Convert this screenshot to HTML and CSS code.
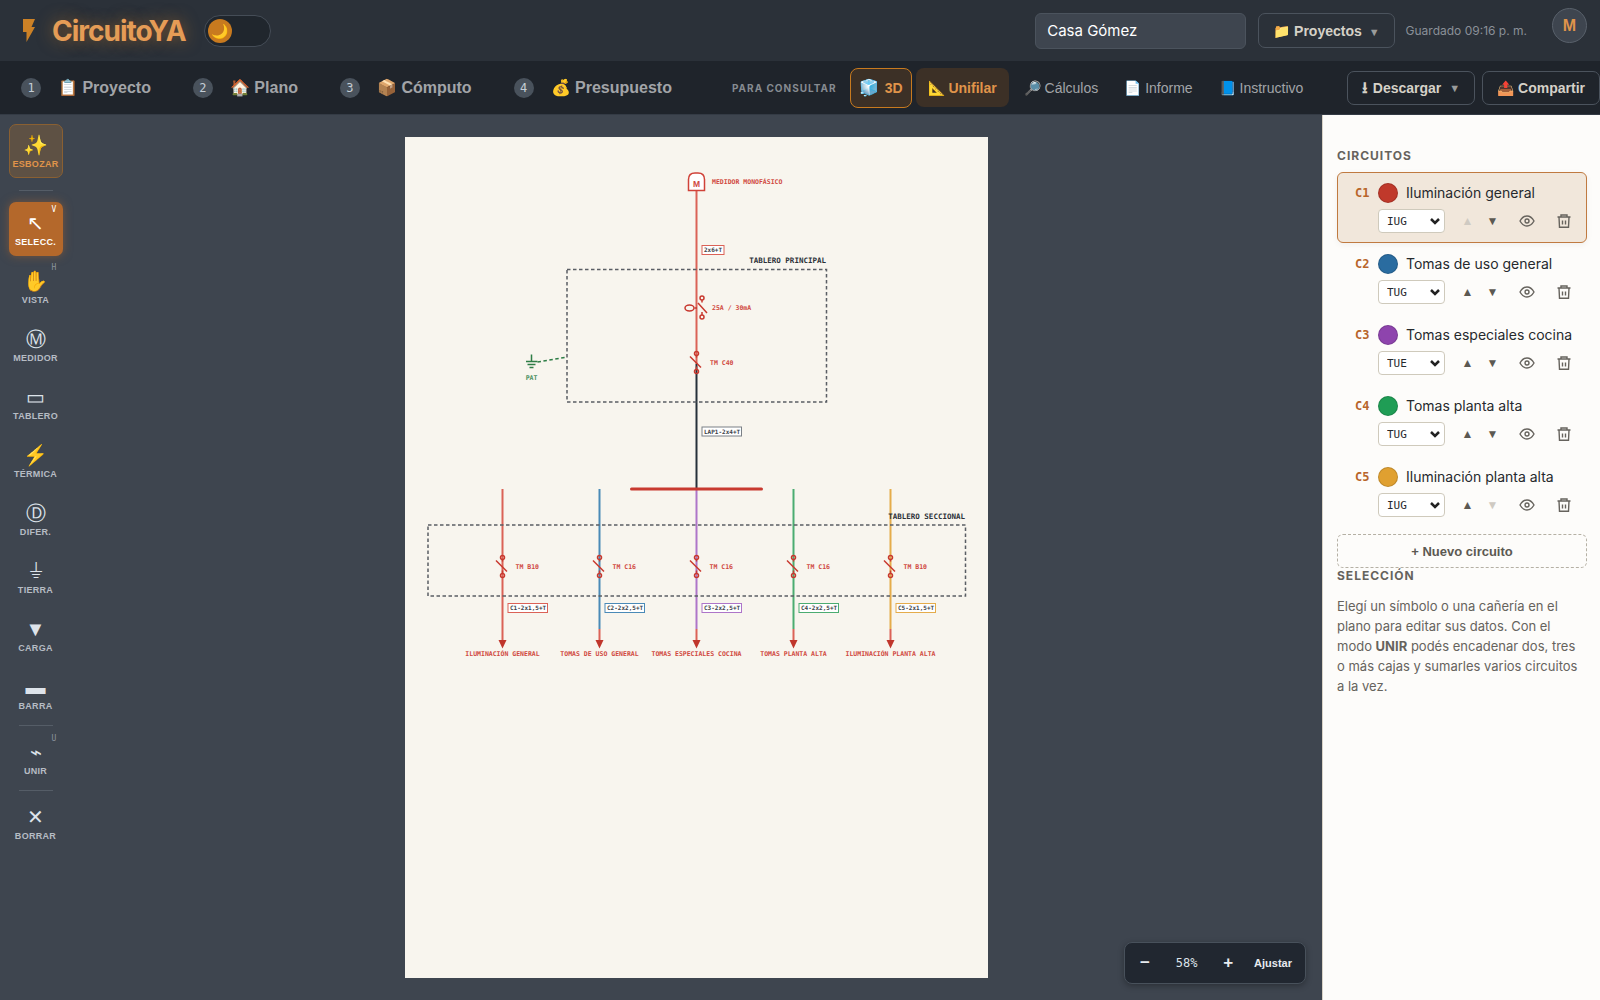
FILE: index.html
```html
<!DOCTYPE html>
<html lang="es">
<head>
<meta charset="utf-8">
<meta name="viewport" content="width=device-width, initial-scale=1">
<title>CircuitoYA</title>
<link rel="stylesheet" href="styles.css">
</head>
<body>
<svg class="defs" aria-hidden="true">
  <symbol id="eye" viewBox="0 0 16 16"><path d="M1 8C3 4.500 5.300 3 8 3s5 1.500 7 5c-2 3.500-4.300 5-7 5S3 11.500 1 8z"/><circle cx="8" cy="8" r="2"/></symbol>
  <symbol id="trash" viewBox="0 0 16 16"><path d="M1.500 4h13M5 4V2h6v2M3 4l.5 10.300h9L13 4M6.500 7.500v4M9.500 7.500v4"/></symbol>
  <symbol id="breaker" viewBox="-20 -30 40 60" overflow="visible"><path d="M-13-12L9 10"/><path d="M0-14v4M0 14v-6"/><circle cy="-18" r="4"/><circle cy="18" r="4"/></symbol>
</svg>
<div class="app">
  <header class="topbar">
    <svg class="bolt" viewBox="0 0 14 23" aria-hidden="true"><path d="M1 0h12L9.500 8H13L4.500 23V13H1z"/></svg>
    <h1 class="brand">CircuitoYA</h1>
    <button class="theme" type="button" aria-label="Cambiar tema"><span class="knob">🌙</span></button>
    <input class="project-name" type="text" value="Casa Gómez" aria-label="Nombre del proyecto">
    <button class="btn" type="button">📁 Proyectos <span class="caret">▼</span></button>
    <span class="saved">Guardado 09:16 p. m.</span>
    <button class="avatar" type="button">M</button>
  </header>

  <nav class="tabs">
    <button class="step" type="button"><span class="num">1</span>📋 Proyecto</button>
    <button class="step" type="button"><span class="num">2</span>🏠 Plano</button>
    <button class="step" type="button"><span class="num">3</span>📦 Cómputo</button>
    <button class="step" type="button"><span class="num">4</span>💰 Presupuesto</button>
    <span class="hint">PARA CONSULTAR</span>
    <button class="view view-3d" type="button"><span class="cube">🧊</span> 3D</button>
    <button class="view active" type="button">📐 Unifilar</button>
    <button class="view" type="button">🔎 Cálculos</button>
    <button class="view" type="button">📄 Informe</button>
    <button class="view" type="button">📘 Instructivo</button>
    <button class="btn download" type="button"><span class="down">⭳</span>Descargar<span class="caret">▼</span></button>
    <button class="btn" type="button">📤 Compartir</button>
  </nav>

  <div class="work">
    <aside class="tools">
      <button class="tool sketch" type="button"><span class="glyph">✨</span>ESBOZAR</button>
      <hr>
      <button class="tool selected" type="button"><kbd>V</kbd><span class="glyph">↖</span>SELECC.</button>
      <button class="tool" type="button"><kbd>H</kbd><span class="glyph">✋</span>VISTA</button>
      <button class="tool" type="button"><span class="glyph">Ⓜ</span>MEDIDOR</button>
      <button class="tool" type="button"><span class="glyph">▭</span>TABLERO</button>
      <button class="tool" type="button"><span class="glyph">⚡</span>TÉRMICA</button>
      <button class="tool" type="button"><span class="glyph">Ⓓ</span>DIFER.</button>
      <button class="tool" type="button"><span class="glyph">⏚</span>TIERRA</button>
      <button class="tool" type="button"><span class="glyph">▼</span>CARGA</button>
      <button class="tool" type="button"><span class="glyph">▬</span>BARRA</button>
      <hr>
      <button class="tool" type="button"><kbd>U</kbd><span class="glyph">⌁</span>UNIR</button>
      <hr>
      <button class="tool" type="button"><span class="glyph">✕</span>BORRAR</button>
    </aside>

    <main class="stage">
      <svg class="paper" viewBox="0 0 1166 1682" role="img" aria-label="Esquema unifilar">
        <g class="wires">
          <path class="red" d="M583 108V454"/>
          <path class="feed" d="M583 454V704"/>
          <path class="red" d="M195 704V1008"/>
          <path class="blue" d="M389 704V984"/>
          <path class="purple" d="M583 704V984"/>
          <path class="green" d="M777 704V984"/>
          <path class="yellow" d="M971 704V984"/>
          <path class="red" d="M389 984v24M583 984v24M777 984v24M971 984v24"/>
        </g>
        <g class="boards">
          <rect x="324" y="265" width="519" height="265"/>
          <rect x="46" y="776" width="1075" height="142"/>
        </g>
        <path class="bus" d="M453 704H713"/>
        <g class="earth">
          <path d="M253 435v14M242 449h23M245 455h16M249 461h8"/>
          <path class="dash" d="M265 450L324 440"/>
        </g>
        <path class="meter" d="M567 107V85q0-13 13-13h6q13 0 13 13v22z"/>
        <g class="device">
          <circle cx="594" cy="322" r="4"/><circle cx="594" cy="360" r="4"/>
          <path d="M586 332L604 352M594 326v5M594 356v-6M579 342h5"/>
          <ellipse cx="569" cy="342" rx="9" ry="6"/>
          <use href="#breaker" x="563" y="421" width="40" height="60"/>
          <use href="#breaker" x="175" y="829" width="40" height="60"/>
          <use href="#breaker" x="369" y="829" width="40" height="60"/>
          <use href="#breaker" x="563" y="829" width="40" height="60"/>
          <use href="#breaker" x="757" y="829" width="40" height="60"/>
          <use href="#breaker" x="951" y="829" width="40" height="60"/>
        </g>
        <path class="arrows" d="M187 1006h16l-8 17zM381 1006h16l-8 17zM575 1006h16l-8 17zM769 1006h16l-8 17zM963 1006h16l-8 17z"/>
        <g class="plates">
          <rect class="red" x="594" y="217" width="44" height="18"/>
          <rect class="feed" x="594" y="580" width="79" height="18"/>
          <rect class="red" x="206" y="933" width="79" height="18"/>
          <rect class="blue" x="400" y="933" width="79" height="18"/>
          <rect class="purple" x="594" y="933" width="79" height="18"/>
          <rect class="green" x="788" y="933" width="79" height="18"/>
          <rect class="yellow" x="982" y="933" width="79" height="18"/>
        </g>
        <g class="plate-text">
          <text x="598" y="230">2x6+T</text>
          <text x="598" y="593">LAP1-2x4+T</text>
          <text x="210" y="946">C1-2x1,5+T</text>
          <text x="404" y="946">C2-2x2,5+T</text>
          <text x="598" y="946">C3-2x2,5+T</text>
          <text x="792" y="946">C4-2x2,5+T</text>
          <text x="986" y="946">C5-2x1,5+T</text>
        </g>
        <g class="device-text">
          <text class="meter-letter" x="583" y="100">M</text>
          <text x="614" y="93">MEDIDOR MONOFÁSICO</text>
          <text x="614" y="346">25A / 30mA</text>
          <text x="610" y="455">TM C40</text>
          <text x="221" y="864">TM B10</text>
          <text x="415" y="864">TM C16</text>
          <text x="609" y="864">TM C16</text>
          <text x="803" y="864">TM C16</text>
          <text x="997" y="864">TM B10</text>
        </g>
        <g class="device-text centered">
          <text class="pat" x="253" y="486">PAT</text>
          <text x="195" y="1037">ILUMINACIÓN GENERAL</text>
          <text x="389" y="1037">TOMAS DE USO GENERAL</text>
          <text x="583" y="1037">TOMAS ESPECIALES COCINA</text>
          <text x="777" y="1037">TOMAS PLANTA ALTA</text>
          <text x="971" y="1037">ILUMINACIÓN PLANTA ALTA</text>
        </g>
        <g class="board-text">
          <text x="842" y="252">TABLERO PRINCIPAL</text>
          <text x="1120" y="763">TABLERO SECCIONAL</text>
        </g>
      </svg>
      <div class="zoom">
        <button type="button" class="sign" aria-label="Alejar">−</button>
        <span class="level">58%</span>
        <button type="button" class="sign" aria-label="Acercar">+</button>
        <button type="button">Ajustar</button>
      </div>
    </main>

    <aside class="panel">
      <h2>CIRCUITOS</h2>
      <ul class="circuits">
        <li class="circuit current">
          <span class="code">C1</span><span class="dot c1"></span><span class="name">Iluminación general</span>
          <div class="controls">
            <select aria-label="Tipo de C1"><option>IUG</option></select>
            <button class="move" type="button" aria-label="Subir" disabled>▲</button>
            <button class="move" type="button" aria-label="Bajar">▼</button>
            <button class="icon" type="button" aria-label="Ver"><svg><use href="#eye"/></svg></button>
            <button class="icon" type="button" aria-label="Eliminar"><svg><use href="#trash"/></svg></button>
          </div>
        </li>
        <li class="circuit">
          <span class="code">C2</span><span class="dot c2"></span><span class="name">Tomas de uso general</span>
          <div class="controls">
            <select aria-label="Tipo de C2"><option>TUG</option></select>
            <button class="move" type="button" aria-label="Subir">▲</button>
            <button class="move" type="button" aria-label="Bajar">▼</button>
            <button class="icon" type="button" aria-label="Ver"><svg><use href="#eye"/></svg></button>
            <button class="icon" type="button" aria-label="Eliminar"><svg><use href="#trash"/></svg></button>
          </div>
        </li>
        <li class="circuit">
          <span class="code">C3</span><span class="dot c3"></span><span class="name">Tomas especiales cocina</span>
          <div class="controls">
            <select aria-label="Tipo de C3"><option>TUE</option></select>
            <button class="move" type="button" aria-label="Subir">▲</button>
            <button class="move" type="button" aria-label="Bajar">▼</button>
            <button class="icon" type="button" aria-label="Ver"><svg><use href="#eye"/></svg></button>
            <button class="icon" type="button" aria-label="Eliminar"><svg><use href="#trash"/></svg></button>
          </div>
        </li>
        <li class="circuit">
          <span class="code">C4</span><span class="dot c4"></span><span class="name">Tomas planta alta</span>
          <div class="controls">
            <select aria-label="Tipo de C4"><option>TUG</option></select>
            <button class="move" type="button" aria-label="Subir">▲</button>
            <button class="move" type="button" aria-label="Bajar">▼</button>
            <button class="icon" type="button" aria-label="Ver"><svg><use href="#eye"/></svg></button>
            <button class="icon" type="button" aria-label="Eliminar"><svg><use href="#trash"/></svg></button>
          </div>
        </li>
        <li class="circuit">
          <span class="code">C5</span><span class="dot c5"></span><span class="name">Iluminación planta alta</span>
          <div class="controls">
            <select aria-label="Tipo de C5"><option>IUG</option></select>
            <button class="move" type="button" aria-label="Subir">▲</button>
            <button class="move" type="button" aria-label="Bajar" disabled>▼</button>
            <button class="icon" type="button" aria-label="Ver"><svg><use href="#eye"/></svg></button>
            <button class="icon" type="button" aria-label="Eliminar"><svg><use href="#trash"/></svg></button>
          </div>
        </li>
      </ul>
      <button class="add" type="button">+ Nuevo circuito</button>
      <h2>SELECCIÓN</h2>
      <p class="help">Elegí un símbolo o una cañería en el plano para editar sus datos. Con el modo <b>UNIR</b> podés encadenar dos, tres o más cajas y sumarles varios circuitos a la vez.</p>
    </aside>
  </div>
</div>
</body>
</html>
```
FILE: styles.css
```css
:root {
  --ui: "Liberation Sans", Arial, sans-serif;
  --text: Inter, sans-serif;
  --mono: "DejaVu Sans Mono", monospace;
  --line: #4b535d;
  --orange: #e0944a;
}
* { box-sizing: border-box; }
body { margin: 0; font-family: var(--text); overflow: hidden; }
button { font-family: var(--ui); border: 0; background: none; padding: 0; cursor: pointer; }
.defs { display: none; }
.app { display: flex; flex-direction: column; height: 100vh; }

/* Top bar */
.topbar { display: flex; align-items: center; height: 61px; padding: 0 13px 0 22px; background: #2b3139; }
.bolt { width: 14px; height: 23px; fill: #cc8126; }
.brand { margin: 0 18px 0 16px; font-size: 28px; line-height: 34px; letter-spacing: -1px; color: #e59c56; text-shadow: 0 0 16px rgba(212, 129, 38, .55); }
.theme { display: flex; align-items: center; width: 67px; height: 32px; padding: 0 3px; border: 1px solid #454d57; border-radius: 16px; background: #20262d; }
.knob { display: grid; place-items: center; width: 24px; height: 24px; border-radius: 50%; background: #c87a1f; font-size: 14px; }
.project-name { width: 211px; height: 36px; margin: 0 12px 0 auto; padding: 0 11px; border: 1px solid #4b535d; border-radius: 6px; background: #3e454f; color: #fff; font: 15px var(--text); }
.btn { height: 35px; padding: 0 14px; border: 1px solid var(--line); border-radius: 7px; color: #d5d1c8; font-size: 14px; font-weight: bold; white-space: nowrap; }
.caret { margin-left: 3px; font-size: 11px; color: #9a9b9b; }
.saved { margin: 0 25px 0 11px; font-size: 12px; color: #8a9098; white-space: nowrap; }
.avatar { width: 35px; height: 35px; margin-bottom: 10px; border: 1px solid #59616b; border-radius: 50%; background: #3e454f; color: var(--orange); font-size: 16px; font-weight: bold; }

/* Navigation */
.tabs { display: flex; align-items: center; height: 54px; padding-left: 21px; background: #1f242b; border-bottom: 1px solid #343b45; white-space: nowrap; }
.step { display: flex; align-items: center; margin-right: 42px; color: #a2a4a8; font-size: 16px; font-weight: bold; }
.num { display: grid; place-items: center; width: 20px; height: 20px; margin-right: 17px; border-radius: 50%; background: #49525c; color: #c4cdd5; font: 12px var(--mono); }
.hint { margin: 0 13px 0 18px; font-size: 10px; font-weight: bold; letter-spacing: 1px; color: #868b91; }
.view { height: 39px; padding: 0 11px; margin-right: 4px; border-radius: 8px; color: #a2a4a8; font-size: 14px; }
.view-3d { display: flex; align-items: center; gap: 6px; height: 40px; padding: 0 8px; border: 1px solid #c87a1f; background: #3c3026; color: var(--orange); font-weight: bold; }
.cube { font-size: 16px; }
.active { padding: 0 12px; background: #3c3026; color: var(--orange); font-weight: bold; }
.tabs .btn { height: 34px; }
.tabs .download { display: flex; align-items: center; gap: 5px; margin: 0 7px 0 auto; }
.down { font-size: 16px; line-height: 16px; }

/* Work area */
.work { display: flex; flex: 1; min-height: 0; background: #3e454f; }
.tools { display: flex; flex-direction: column; align-items: center; gap: 4px; width: 71px; padding-top: 9px; }
.tools hr { width: 34px; height: 1px; margin: 1px 0; border: 0; background: #555d67; }
.tools .sketch + hr { margin: 8px 0 7px; }
.tool { position: relative; display: flex; flex-direction: column; align-items: center; justify-content: center; width: 54px; height: 54px; border-radius: 7px; color: #b6bcc4; font-size: 9px; font-weight: bold; letter-spacing: .3px; }
.glyph { height: 26px; color: #dde3ea; font-size: 20px; font-weight: normal; line-height: 24px; letter-spacing: 0; }
.tool kbd { position: absolute; top: 3px; right: 6px; font: 8px var(--mono); color: #8b929b; }
.sketch { border: 1px solid #8a6032; background: #5e5144; color: var(--orange); }
.selected { background: #b4682b; color: #fff; box-shadow: 0 0 10px rgba(180, 104, 43, .5); }
.selected .glyph, .selected kbd { color: #fff; }

.stage { position: relative; display: flex; flex: 1; justify-content: center; min-width: 0; padding: 22px; }
.paper { height: 100%; aspect-ratio: 583 / 841; background: #f8f5ee; }
.wires path { fill: none; stroke-width: 4; }
.red { stroke: #db6257; }
.blue { stroke: #4a8ab7; }
.purple { stroke: #ae75c9; }
.green { stroke: #4bac71; }
.yellow { stroke: #e5ac4b; }
.feed { stroke: #26303a; }
.boards rect { fill: none; stroke: #5a5e64; stroke-width: 3; stroke-dasharray: 7 5; }
.bus { stroke: #c8392f; stroke-width: 6; stroke-linecap: round; }
.earth { fill: none; stroke: #2e7d46; stroke-width: 3; }
.dash { stroke-dasharray: 7 5; }
.meter { fill: #fff; stroke: #d04238; stroke-width: 3; }
.device { fill: none; stroke: #c8392f; stroke-width: 3; }
.arrows { fill: #c0362c; }
.plates rect { fill: #fff; stroke-width: 2; }
.plates .feed { stroke: #7b8086; }
.plate-text { fill: #3b4149; font: bold 12px var(--mono); }
.device-text { fill: #d0493f; font: bold 13px var(--mono); }
.centered, .meter-letter { text-anchor: middle; }
.meter-letter { font: bold 17px var(--ui); }
.pat { fill: #4a8f5e; }
.board-text { fill: #2c3138; font: bold 15px var(--mono); text-anchor: end; }

.zoom { position: absolute; right: 16px; bottom: 16px; display: flex; align-items: center; justify-content: space-between; width: 182px; height: 42px; padding: 0 13px 0 15px; border: 1px solid #48515b; border-radius: 8px; background: #212730; box-shadow: 0 2px 6px rgba(0, 0, 0, .3); color: #dde3ea; }
.zoom button { color: #e8ebef; font-size: 11px; font-weight: bold; }
.zoom .sign { font-size: 17px; }
.level { margin: 0 5px; font: 12px var(--mono); }

/* Circuits panel */
.panel { width: 278px; padding: 33px 13px 0 14px; border-left: 1px solid #d8d2c6; background: #fdfcfa; color: #66635d; }
.panel h2 { margin: 0; font-size: 12px; line-height: 16px; letter-spacing: 1px; }
.circuits { margin: 8px 0 7px; padding: 0; list-style: none; }
.circuit { display: grid; grid-template-columns: 23px 28px 1fr; align-content: start; align-items: center; height: 71px; padding: 10px 0 0 17px; border: 1px solid transparent; border-radius: 6px; }
.current { border-color: #c07a40; background: #f1e7db; box-shadow: 0 2px 6px rgba(0, 0, 0, .05); }
.code { color: #b8652a; font: bold 12px/20px var(--mono); }
.dot { width: 20px; height: 20px; border: 1px solid rgba(0, 0, 0, .15); border-radius: 50%; }
.c1 { background: #c0392b; }
.c2 { background: #2a6ca0; }
.c3 { background: #8e44ad; }
.c4 { background: #1f9d55; }
.c5 { background: #e0a030; }
.name { color: #26292d; font-size: 14px; line-height: 20px; white-space: nowrap; }
.controls { grid-column: 2 / 4; display: flex; align-items: center; margin-top: 6px; }
.controls select { appearance: none; width: 67px; height: 24px; margin-right: 10px; padding: 0 0 0 8px; border: 1px solid #cfcabc; border-radius: 4px; background: #fff url("data:image/svg+xml,%3Csvg xmlns='http://www.w3.org/2000/svg' viewBox='0 0 12 8'%3E%3Cpath d='M2 2l4 4 4-4' fill='none' stroke='%23222' stroke-width='2.500'/%3E%3C/svg%3E") no-repeat right 3px center / 12px 8px; color: #26292d; font: 11px var(--mono); }
.move { width: 25px; height: 24px; color: #5c5952; font-size: 12px; }
.move:disabled { color: #cfcac2; }
.icon { display: grid; place-items: center; width: 37px; height: 24px; margin-left: 3px; }
.icon + .icon { margin-left: 0; }
.icon svg { width: 16px; height: 16px; fill: none; stroke: #66635d; stroke-width: 1.4; }
.add { display: block; width: 100%; height: 34px; border: 1px dashed #b5b0a4; border-radius: 6px; color: #5c5952; font-size: 13px; font-weight: bold; }
.help { margin: 12px 0 0; padding-right: 4px; font-size: 13px; line-height: 20px; }
```
